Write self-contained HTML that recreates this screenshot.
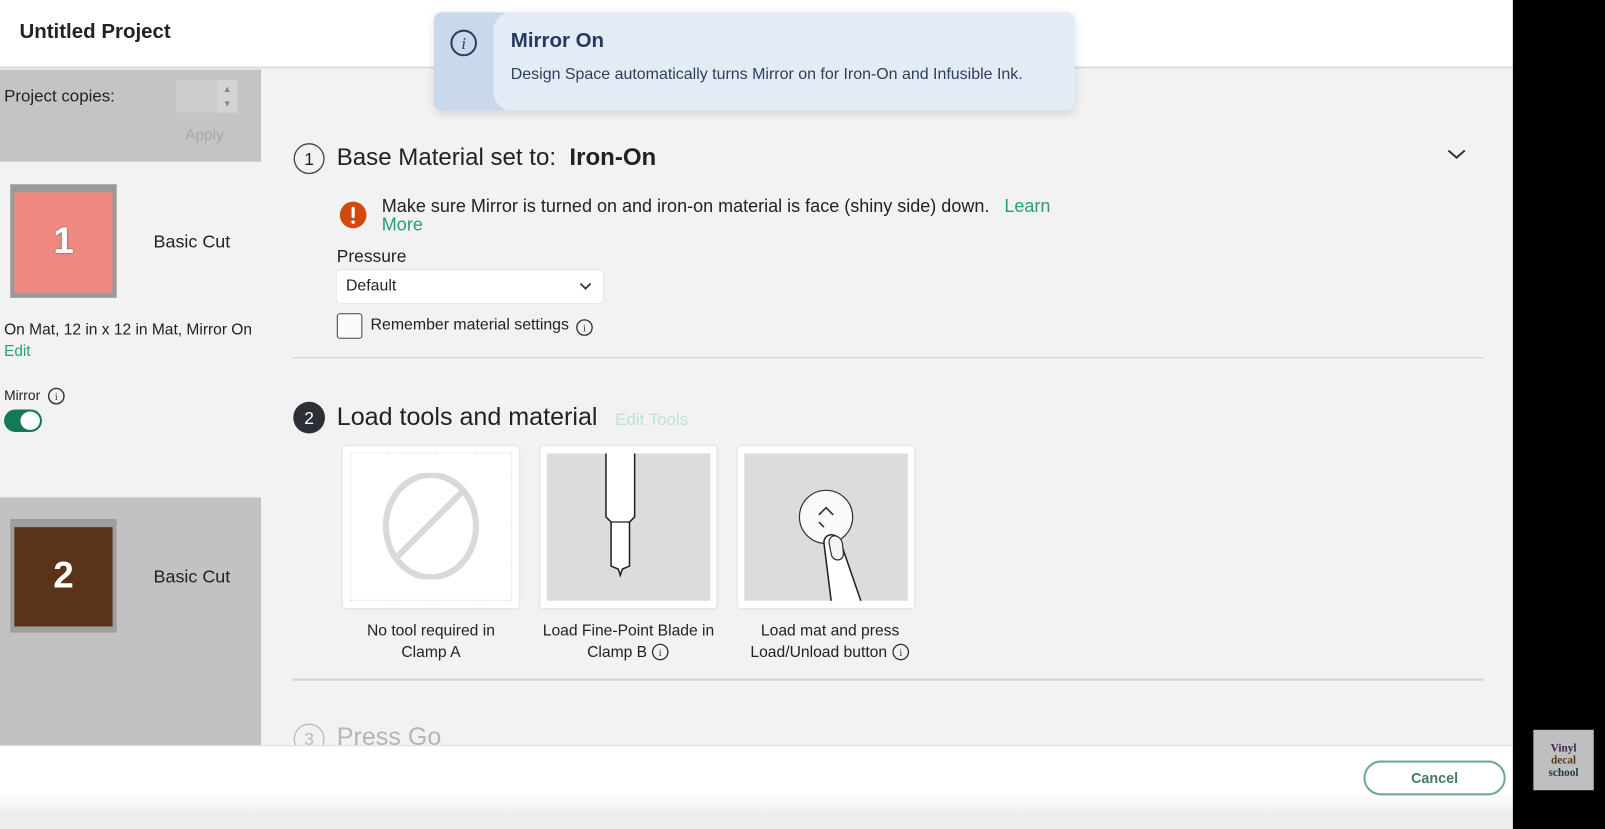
<!DOCTYPE html>
<html><head><meta charset="utf-8"><style>
*{margin:0;padding:0;box-sizing:border-box}
body{width:1605px;height:810px;overflow:hidden;background:#eee;font-family:"Liberation Sans",sans-serif;color:#222;position:relative}
#w{position:absolute;left:0;top:0;width:1568px;height:800px;transform:scale(1.02360);transform-origin:0 0;background:#f2f2f2}
.a{position:absolute;white-space:nowrap}
</style></head><body><div id="w">
<!-- header -->
<div class="a" style="left:0;top:0;width:1478px;height:67px;background:#fff;border-bottom:2px solid #ddd"></div>
<div class="a" style="left:19px;top:20px;font-size:20px;font-weight:bold;color:#222">Untitled Project</div>
<!-- sidebar -->
<div class="a" style="left:0;top:68px;width:255px;height:90px;background:#c4c4c4"></div>
<div class="a" style="left:4px;top:85px;font-size:16.5px;color:#222">Project copies:</div>
<div class="a" style="left:172px;top:78px;width:60px;height:32px;background:#cdcdcd"></div>
<div class="a" style="left:212px;top:78px;width:20px;height:32px;background:#d4d4d4;font-size:9px;color:#888;text-align:center;line-height:14px;padding-top:2px">▲<br>▼</div>
<div class="a" style="left:181px;top:124px;font-size:15px;color:#a9a9a9">Apply</div>

<div class="a" style="left:10px;top:180px;width:104px;height:111px;background:#9a9a9a"></div>
<div class="a" style="left:14px;top:188px;width:96px;height:98px;background:#ef8a82"></div>
<div class="a" style="left:14px;top:214px;width:96px;text-align:center;font-size:36px;font-weight:bold;color:#fff;text-shadow:0 0 2px #555">1</div>
<div class="a" style="left:150px;top:226px;font-size:17.5px;color:#222">Basic Cut</div>
<div class="a" style="left:4px;top:314px;font-size:15.2px;color:#222">On Mat, 12 in x 12 in Mat, Mirror On</div>
<div class="a" style="left:4px;top:335px;font-size:15px;color:#2a9d78">Edit</div>
<div class="a" style="left:4px;top:379px;font-size:13.5px;color:#222">Mirror</div>
<svg class="a" style="left:46px;top:378px" width="18" height="18"><circle cx="9" cy="9" r="7.5" fill="none" stroke="#333" stroke-width="1.4"/><text x="9" y="13" font-size="10" text-anchor="middle" font-family="Liberation Serif" fill="#333">i</text></svg>
<div class="a" style="left:4px;top:400px;width:37px;height:22px;border-radius:11px;background:#137a55"></div>
<div class="a" style="left:20px;top:402px;width:19px;height:18px;border-radius:50%;background:#fff"></div>

<div class="a" style="left:0;top:486px;width:255px;height:242px;background:#c2c2c2"></div>
<div class="a" style="left:10px;top:507px;width:104px;height:111px;background:#9e9e9e"></div>
<div class="a" style="left:14px;top:515px;width:96px;height:97px;background:#5b321a"></div>
<div class="a" style="left:14px;top:541px;width:96px;text-align:center;font-size:36px;font-weight:bold;color:#fff">2</div>
<div class="a" style="left:150px;top:553px;font-size:17.5px;color:#222">Basic Cut</div>

<!-- toast -->
<div class="a" style="left:424px;top:12px;width:626px;height:96px;background:#e3ebf4;border-radius:8px;box-shadow:0 3px 10px rgba(0,0,0,.12);overflow:hidden">
 <div style="position:absolute;left:0;top:0;width:70px;height:96px;background:#c9d8eb"></div>
 <div style="position:absolute;left:58px;top:0;width:30px;height:96px;background:#e3ebf4;border-radius:18px 0 0 18px"></div>
</div>
<svg class="a" style="left:439px;top:28px" width="28" height="28"><circle cx="14" cy="14" r="12" fill="none" stroke="#2c3e63" stroke-width="2"/><text x="14" y="20" font-size="16" text-anchor="middle" font-family="Liberation Serif" font-style="italic" fill="#2c3e63">i</text></svg>
<div class="a" style="left:499px;top:29px;font-size:20px;color:#263a5e;font-weight:bold">Mirror On</div>
<div class="a" style="left:499px;top:64px;font-size:15.6px;color:#2f3e5a">Design Space automatically turns Mirror on for Iron-On and Infusible Ink.</div>

<!-- step 1 -->
<svg class="a" style="left:286px;top:139px" width="32" height="32"><circle cx="16" cy="16" r="14.5" fill="none" stroke="#444" stroke-width="1.3"/><text x="16" y="22" font-size="17" text-anchor="middle" fill="#222" font-family="Liberation Sans">1</text></svg>
<div class="a" style="left:329px;top:140px;font-size:23.5px;color:#222">Base Material set to:&nbsp; <b>Iron-On</b></div>
<svg class="a" style="left:1412px;top:144px" width="22" height="14"><path d="M3 3 L11 10 L19 3" fill="none" stroke="#333" stroke-width="2"/></svg>
<svg class="a" style="left:331px;top:196px" width="28" height="28"><circle cx="14" cy="14" r="13" fill="#d04a0f"/><rect x="12.5" y="6" width="3" height="11" rx="1.5" fill="#fff"/><circle cx="14" cy="21" r="1.7" fill="#fff"/></svg>
<div class="a" style="left:373px;top:191px;font-size:17.6px;color:#222">Make sure Mirror is turned on and iron-on material is face (shiny side) down.&nbsp;&nbsp; <span style="color:#2a9d78">Learn</span></div>
<div class="a" style="left:373px;top:209px;font-size:17.6px;color:#2a9d78">More</div>
<div class="a" style="left:329px;top:241px;font-size:17px;color:#222">Pressure</div>
<div class="a" style="left:329px;top:264px;width:260px;height:32px;background:#fff;border-radius:4px;box-shadow:0 0 2px rgba(0,0,0,.12)"></div>
<div class="a" style="left:338px;top:271px;font-size:15.5px;color:#222">Default</div>
<svg class="a" style="left:565px;top:275px" width="14" height="10"><path d="M2 2 L7 7 L12 2" fill="none" stroke="#333" stroke-width="1.7"/></svg>
<div class="a" style="left:329px;top:306px;width:25px;height:25px;border:1.5px solid #444;border-radius:3px;background:#fafafa"></div>
<div class="a" style="left:362px;top:309px;font-size:15.5px;color:#222">Remember material settings</div>
<svg class="a" style="left:562px;top:311px" width="18" height="18"><circle cx="9" cy="9" r="7.5" fill="none" stroke="#333" stroke-width="1.3"/><text x="9" y="13" font-size="10" text-anchor="middle" font-family="Liberation Serif" fill="#333">i</text></svg>
<div class="a" style="left:286px;top:349px;width:1163px;height:1px;background:#cfcfcf"></div>

<!-- step 2 -->
<svg class="a" style="left:286px;top:392px" width="32" height="32"><circle cx="16" cy="16" r="15.5" fill="#2d2f36"/><text x="16" y="22" font-size="17" text-anchor="middle" fill="#fff" font-family="Liberation Sans">2</text></svg>
<div class="a" style="left:329px;top:394px;font-size:24.5px;color:#222">Load tools and material</div>
<div class="a" style="left:601px;top:401px;font-size:16.5px;color:#bfe0d4">Edit Tools</div>

<div class="a" style="left:335px;top:436px;width:172px;height:158px;background:#fff;border-radius:3px;box-shadow:0 0 3px rgba(0,0,0,.1)"></div>
<div class="a" style="left:342px;top:442px;width:158px;height:145px;border:1px dotted #ddd"></div>
<svg class="a" style="left:370px;top:462px" width="104" height="104"><ellipse cx="51" cy="52" rx="44" ry="50" fill="none" stroke="#d9d9d9" stroke-width="6"/><line x1="16" y1="84" x2="84" y2="16" stroke="#d9d9d9" stroke-width="6"/></svg>

<div class="a" style="left:528px;top:436px;width:172px;height:158px;background:#fff;border-radius:3px;box-shadow:0 0 3px rgba(0,0,0,.1)"></div>
<svg class="a" style="left:534px;top:443px" width="160" height="144"><rect width="160" height="144" fill="#dcdcdc"/><path d="M58 0 V62 L63 67 V110 L70 113 L72 119 L74 113 L81 110 V67 L86 62 V0" fill="#fff" stroke="#222" stroke-width="1.5"/><line x1="62" y1="67" x2="82" y2="67" stroke="#222" stroke-width="1.2"/></svg>

<div class="a" style="left:721px;top:436px;width:172px;height:158px;background:#fff;border-radius:3px;box-shadow:0 0 3px rgba(0,0,0,.1)"></div>
<svg class="a" style="left:727px;top:443px" width="160" height="144"><rect width="160" height="144" fill="#dcdcdc"/><circle cx="80" cy="62" r="26" fill="#fafafa" stroke="#333" stroke-width="1.2"/><path d="M73 60 L80 53 L87 60" fill="none" stroke="#333" stroke-width="1.6"/><path d="M73 67 L78 72" fill="none" stroke="#333" stroke-width="1.6"/><path d="M85 144 L78 88 C77 78 90 76 94 86 L114 144" fill="#fff" stroke="#222" stroke-width="1.5"/><path d="M83 88 C82 78 94 78 96 88 L97 98 C97 106 86 106 85 98Z" fill="#f4f4f4" stroke="#333" stroke-width="1.2"/></svg>

<div class="a" style="left:335px;top:606px;width:172px;text-align:center;font-size:15.3px;line-height:21px;color:#222">No tool required in<br>Clamp A</div>
<div class="a" style="left:523px;top:606px;width:182px;text-align:center;font-size:15.3px;line-height:21px;color:#222">Load Fine-Point Blade in<br>Clamp B <svg width="18" height="18" style="vertical-align:-4px"><circle cx="9" cy="9" r="7.5" fill="none" stroke="#333" stroke-width="1.3"/><text x="9" y="13" font-size="10" text-anchor="middle" font-family="Liberation Serif" fill="#333">i</text></svg></div>
<div class="a" style="left:711px;top:606px;width:200px;text-align:center;font-size:15.3px;line-height:21px;color:#222">Load mat and press<br>Load/Unload button <svg width="18" height="18" style="vertical-align:-4px"><circle cx="9" cy="9" r="7.5" fill="none" stroke="#333" stroke-width="1.3"/><text x="9" y="13" font-size="10" text-anchor="middle" font-family="Liberation Serif" fill="#333">i</text></svg></div>
<div class="a" style="left:286px;top:663px;width:1163px;height:2px;background:#d2d2d2"></div>

<!-- step 3 partial -->
<svg class="a" style="left:286px;top:706px" width="32" height="32"><circle cx="16" cy="16" r="14.5" fill="none" stroke="#bbb" stroke-width="1.3"/><text x="16" y="22" font-size="17" text-anchor="middle" fill="#bbb" font-family="Liberation Sans">3</text></svg>
<div class="a" style="left:329px;top:707px;font-size:24.5px;color:#b5b5b5">Press Go</div>

<!-- footer -->
<div class="a" style="left:0;top:728px;width:1478px;height:72px;background:#fff;border-top:1px solid #ddd"></div>
<div class="a" style="left:0;top:775px;width:1478px;height:25px;background:linear-gradient(#fff,#eaeaea)"></div>
<div class="a" style="left:1332px;top:743px;width:139px;height:34px;border:2px solid #6fa796;border-radius:17px;text-align:center;line-height:30px;font-size:14px;font-weight:bold;color:#3f7e69">Cancel</div>

<!-- right black strip -->
<div class="a" style="left:1478px;top:0;width:127px;height:810px;background:#000"></div>
<div class="a" style="left:1498px;top:713px;width:59px;height:59px;background:#bfbfbf;text-align:center;font-family:'Liberation Serif',serif;font-weight:bold;font-size:11px;line-height:12px;color:#3a2550;padding-top:12px">Vinyl<br><span style="color:#5a3a10">decal</span><br><span style="color:#1f3b4a">school</span></div>
</div></body></html>
